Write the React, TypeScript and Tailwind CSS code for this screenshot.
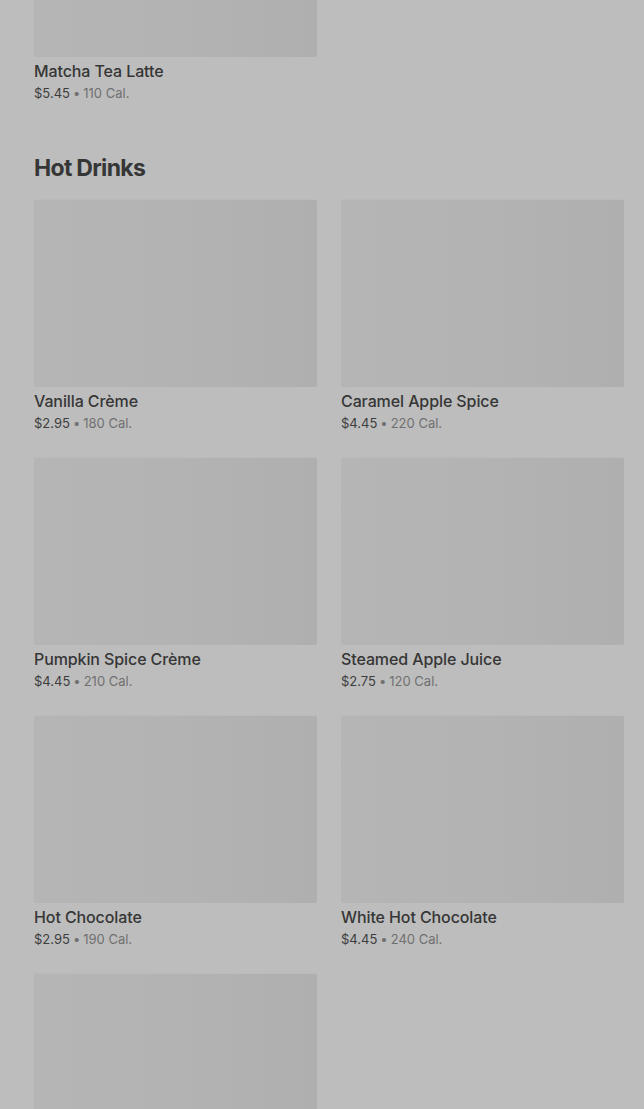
import React from "react";

type Item = { name: string; price: string; cal: string };

const hot: Item[] = [
  { name: "Vanilla Crème", price: "$2.95", cal: "180 Cal." },
  { name: "Caramel Apple Spice", price: "$4.45", cal: "220 Cal." },
  { name: "Pumpkin Spice Crème", price: "$4.45", cal: "210 Cal." },
  { name: "Steamed Apple Juice", price: "$2.75", cal: "120 Cal." },
  { name: "Hot Chocolate", price: "$2.95", cal: "190 Cal." },
  { name: "White Hot Chocolate", price: "$4.45", cal: "240 Cal." },
];

function Card({ item }: { item?: Item }) {
  return (
    <div className="flex flex-col">
      <div className="h-[188px] w-full rounded-[2px] border-t border-[#bababa] bg-gradient-to-r from-[#b5b5b5] via-[#b3b3b3] to-[#afafaf]" />
      {item && (
        <>
          <div className="mt-[2px] text-[16px] leading-[24px] font-medium text-[#363636] tracking-[-0.1px]">
            {item.name}
          </div>
          <div className="text-[13px] leading-[21px] text-[#707070]">
            <span className="text-[#3d3d3d]">{item.price}</span>
            <span className="mx-[3px]">•</span>
            {item.cal}
          </div>
        </>
      )}
    </div>
  );
}

export default function App() {
  return (
    <div
      className="min-h-[1109px] w-[644px] overflow-hidden bg-[#bdbdbd] pl-[34px] pr-[20px]"
      style={{ fontFamily: "Inter, 'Noto Sans', sans-serif" }}
    >
      <div className="-mt-[131px] grid grid-cols-2 gap-x-[24px]">
        <Card item={{ name: "Matcha Tea Latte", price: "$5.45", cal: "110 Cal." }} />
      </div>
      <h2 className="mt-[48px] mb-[15px] text-[23px] leading-[32px] font-bold tracking-[-0.7px] text-[#363636]">
        Hot Drinks
      </h2>
      <div className="grid grid-cols-2 gap-x-[24px] gap-y-[23px]">
        {hot.map((it) => (
          <Card key={it.name} item={it} />
        ))}
        <Card />
      </div>
    </div>
  );
}
